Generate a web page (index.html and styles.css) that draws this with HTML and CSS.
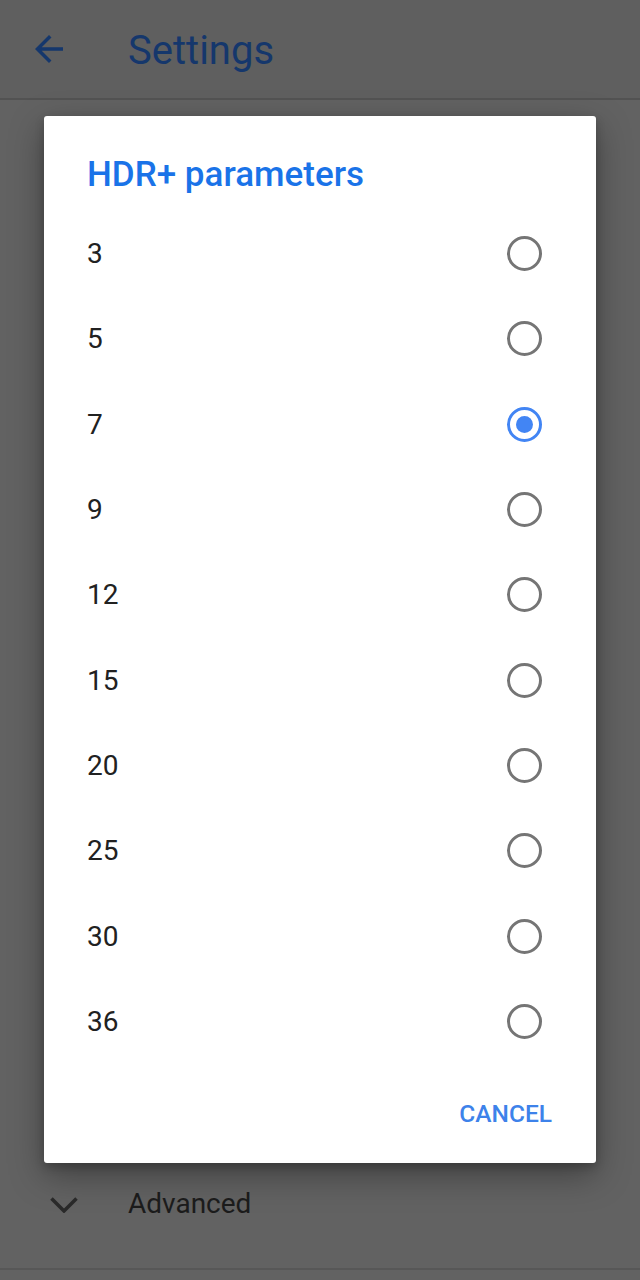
FILE: index.html
```html
<!DOCTYPE html>
<html lang="en">
<head>
<meta charset="utf-8">
<title>HDR+ parameters</title>
<link rel="stylesheet" href="styles.css">
</head>
<body>
<div class="screen">
  <header class="appbar">
    <svg class="back" viewBox="0 0 24 24" width="42" height="42"><path d="M20 11H7.83l5.59-5.59L12 4l-8 8 8 8 1.41-1.41L7.83 13H20v-2z"/></svg>
    <h1 class="appbar-title">Settings</h1>
  </header>
  <main class="content">
    <div class="adv-row">
      <svg class="chev" viewBox="0 0 28 16" width="28" height="16"><polyline points="1.5,1.5 14,14 26.5,1.5"/></svg>
      <span class="adv-label">Advanced</span>
    </div>
  </main>
  <div class="bottom-bar"></div>

  <div class="dialog" role="dialog">
    <h2 class="dialog-title">HDR+ parameters</h2>
    <ul class="options">
      <li class="option"><span class="opt-label">3</span><span class="radio"></span></li>
      <li class="option"><span class="opt-label">5</span><span class="radio"></span></li>
      <li class="option"><span class="opt-label">7</span><span class="radio checked"></span></li>
      <li class="option"><span class="opt-label">9</span><span class="radio"></span></li>
      <li class="option"><span class="opt-label">12</span><span class="radio"></span></li>
      <li class="option"><span class="opt-label">15</span><span class="radio"></span></li>
      <li class="option"><span class="opt-label">20</span><span class="radio"></span></li>
      <li class="option"><span class="opt-label">25</span><span class="radio"></span></li>
      <li class="option"><span class="opt-label">30</span><span class="radio"></span></li>
      <li class="option"><span class="opt-label">36</span><span class="radio"></span></li>
    </ul>
    <div class="actions">
      <button class="btn-text">CANCEL</button>
    </div>
  </div>
</div>
</body>
</html>
```

FILE: styles.css
```css
* { box-sizing: border-box; }
html, body { margin: 0; padding: 0; }
body {
  background: #616161;
  font-family: Roboto, "Liberation Sans", sans-serif;
}
.screen {
  position: relative;
  width: 640px;
  height: 1280px;
  display: flex;
  flex-direction: column;
  overflow: hidden;
}
.appbar {
  height: 100px;
  flex: 0 0 100px;
  display: flex;
  align-items: center;
  background: #5f5f5f;
  border-bottom: 2px solid #525252;
  box-shadow: 0 2px 6px rgba(0,0,0,0.25);
  padding-left: 28px;
}
.back { fill: #15376c; display: block; }
.appbar-title {
  margin: 2px 0 0 58px;
  font-family: Roboto, sans-serif;
  font-weight: 400;
  font-size: 40px;
  color: #15376c;
}
.content {
  flex: 1;
  display: flex;
  flex-direction: column;
  justify-content: flex-end;
  padding-bottom: 31px;
  background: #626262;
}
.adv-row {
  height: 68px;
  display: flex;
  align-items: center;
  padding-left: 50px;
}
.chev { display: block; fill: none; stroke: #2a2a2a; stroke-width: 3.5; margin-top: 4px; }
.adv-label {
  margin-left: 50px;
  font-size: 28px;
  color: #1c1c1c;
}
.bottom-bar {
  height: 12px;
  border-top: 2px solid #575757;
  background: #626262;
}
.dialog {
  position: absolute;
  left: 44px;
  top: 116px;
  width: 552px;
  background: #ffffff;
  border-radius: 3px;
  box-shadow: 0 12px 34px rgba(0,0,0,0.35), 0 4px 10px rgba(0,0,0,0.2);
}
.dialog-title {
  margin: 0;
  padding: 39px 40px 0 43px;
  height: 95px;
  line-height: 40px;
  font-size: 35px;
  font-weight: 500;
  color: #1a73e8;
}
.options {
  list-style: none;
  margin: 0;
  padding: 0;
}
.option {
  height: 85.333px;
  display: flex;
  align-items: center;
  justify-content: space-between;
  padding: 0 54px 0 43px;
}
.opt-label {
  font-size: 28px;
  color: #212121;
}
.radio {
  width: 35px;
  height: 35px;
  border-radius: 50%;
  border: 3.5px solid #757575;
  display: flex;
  align-items: center;
  justify-content: center;
}
.radio.checked { border-color: #4285f4; }
.radio.checked::after {
  content: "";
  width: 17.5px;
  height: 17.5px;
  border-radius: 50%;
  background: #4285f4;
}
.actions {
  display: flex;
  justify-content: flex-end;
  padding: 18px 30px 18px 0;
}
.btn-text {
  height: 63px;
  padding: 0 14px;
  border: 0;
  background: transparent;
  font-family: Roboto, sans-serif;
  font-weight: 500;
  font-size: 24.5px;
  color: #3d82ea;
}
```
